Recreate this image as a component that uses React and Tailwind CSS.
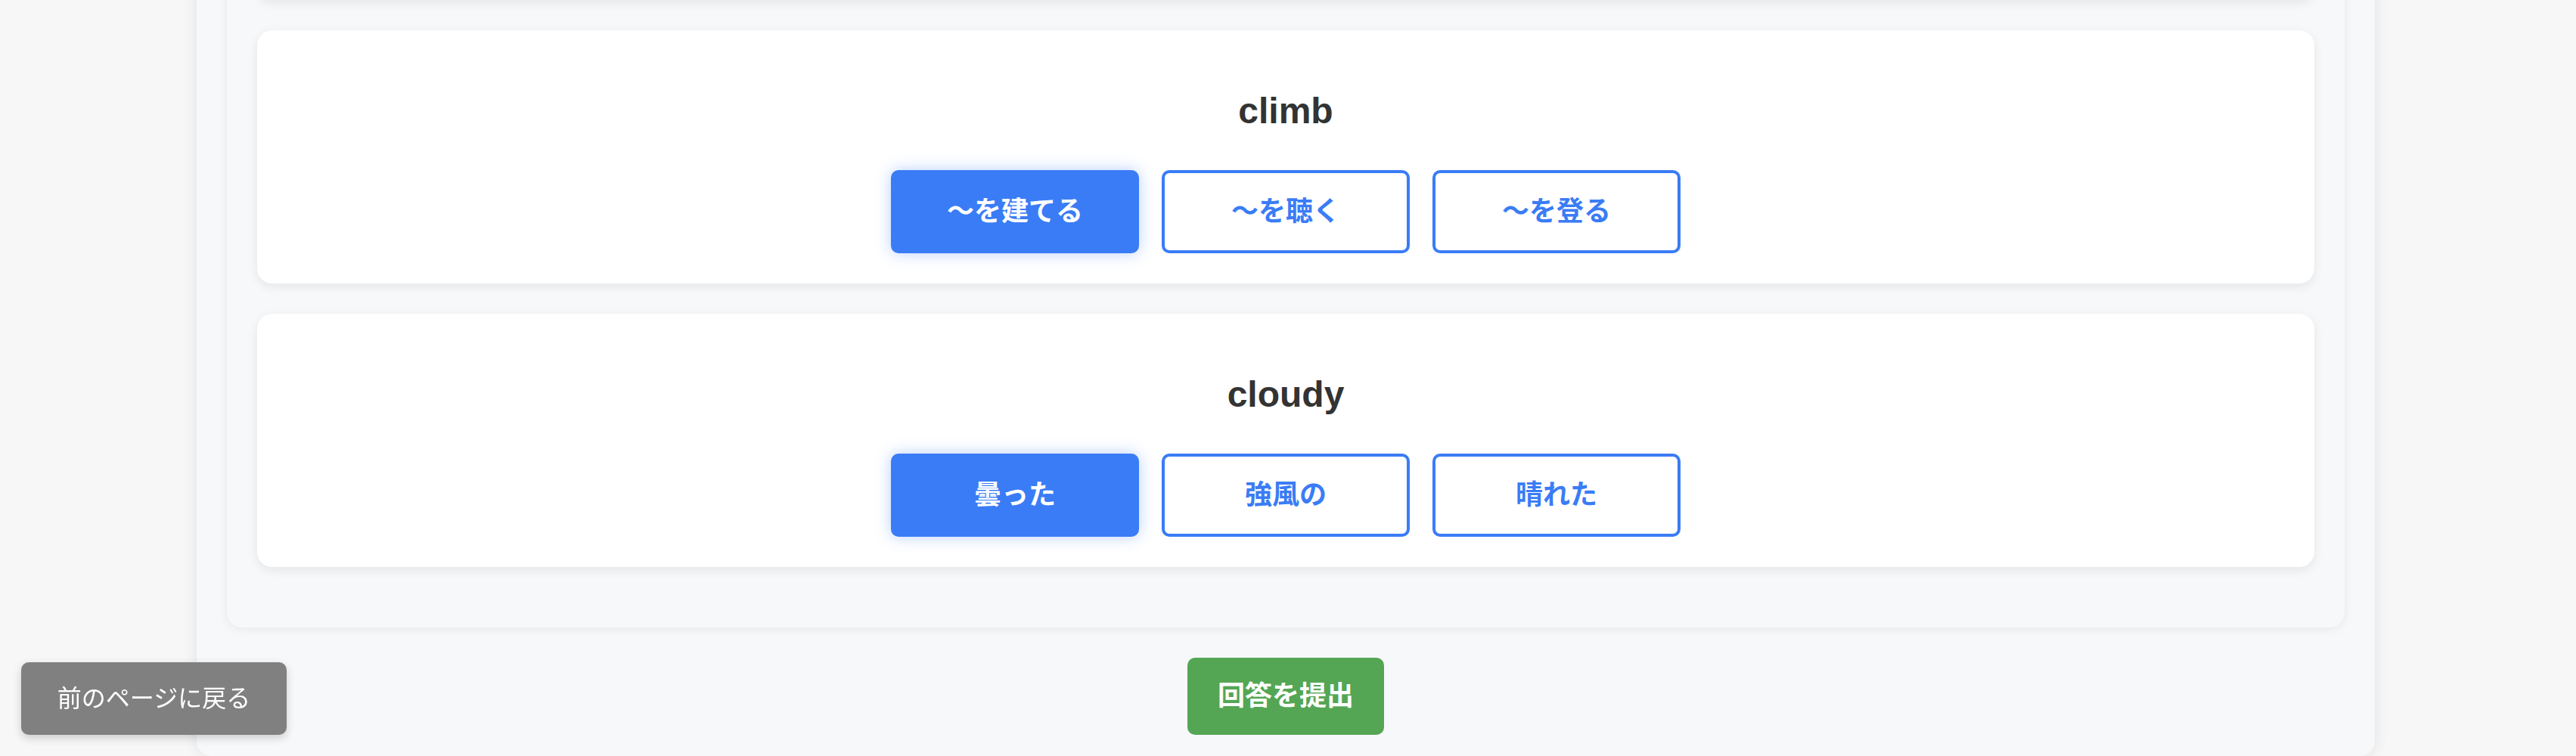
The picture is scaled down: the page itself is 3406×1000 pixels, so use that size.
const questions = [
  { word: "climb", options: ["〜を建てる", "〜を聴く", "〜を登る"], selected: 0 },
  { word: "cloudy", options: ["曇った", "強風の", "晴れた"], selected: 0 },
];

const jp = { fontFamily: '"Liberation Sans", "Noto Sans CJK JP", sans-serif' };

function QuestionCard({ q }) {
  return (
    <div className="mb-10 h-[335px] rounded-[20px] bg-white px-10 pt-[80px] shadow-[0_4px_14px_rgba(0,0,0,0.08)]">
      <h3 className="mb-[51px] text-center text-[48px] leading-[54px] font-bold text-[#333]">
        {q.word}
      </h3>
      <div className="flex justify-center gap-[30px]">
        {q.options.map((opt, i) =>
          i === q.selected ? (
            <button
              key={opt}
              className="h-[110px] w-[328px] rounded-[10px] border-4 border-[#3a7cf6] bg-[#3a7cf6] text-[36px] font-bold text-white shadow-[0_0_20px_rgba(58,124,246,0.35)]"
              style={jp}
            >
              {opt}
            </button>
          ) : (
            <button
              key={opt}
              className="h-[110px] w-[328px] rounded-[10px] border-4 border-[#3a7cf6] bg-white text-[36px] font-bold text-[#3a7cf6]"
              style={jp}
            >
              {opt}
            </button>
          )
        )}
      </div>
    </div>
  );
}

export default function App() {
  return (
    <div
      className="h-screen overflow-hidden bg-[#f7f7f7]"
      style={{ fontFamily: '"Liberation Sans", "Noto Sans CJK JP", sans-serif' }}
    >
      <div className="-mt-[375px] ml-[260px] w-[2880px] rounded-b-[20px] bg-[#f7f8fa] px-10 pb-[28px] shadow-[0_0_20px_rgba(0,0,0,0.09)]">
        <div className="rounded-[20px] bg-[#f7f8fa] p-10 shadow-[0_2px_14px_rgba(0,0,0,0.07)]">
          {/* previous question, scrolled out of view */}
          <div className="mb-10 h-[335px] rounded-[20px] bg-white shadow-[0_4px_14px_rgba(0,0,0,0.08)]" />
          {questions.map((q) => (
            <QuestionCard key={q.word} q={q} />
          ))}
        </div>
        <div className="mt-10 flex justify-center">
          <button className="h-[102px] w-[260px] rounded-[10px] bg-[#54a654] text-[36px] font-bold text-white">
            回答を提出
          </button>
        </div>
      </div>

      <button className="fixed bottom-[28px] left-[28px] h-[96px] w-[351px] rounded-[10px] bg-[#808080] text-[32px] leading-[48px] text-white shadow-[0_4px_12px_rgba(0,0,0,0.18)]">
        前のページに戻る
      </button>
    </div>
  );
}
